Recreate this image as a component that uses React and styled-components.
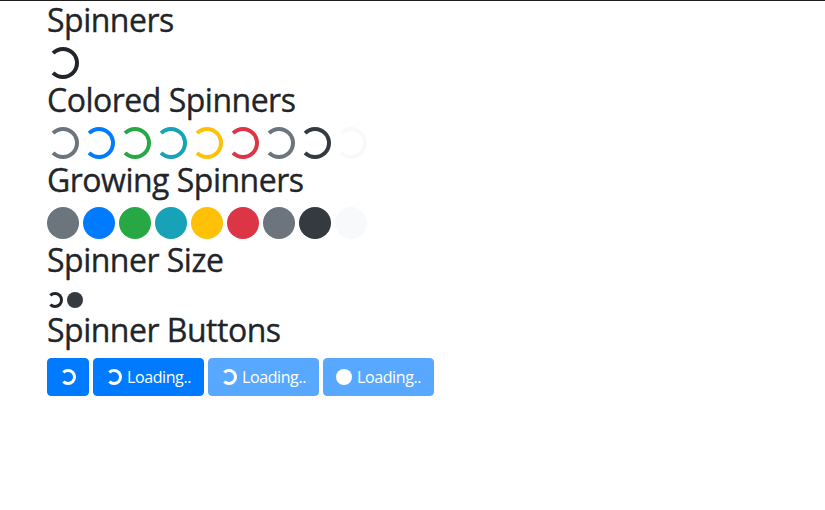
import React from "react";
import styled, { createGlobalStyle } from "styled-components";

const GlobalStyle = createGlobalStyle`
  html, body { margin: 0; padding: 0; background: #fff; }
  body {
    font-family: "Open Sans", "Noto Sans", sans-serif;
    font-size: 16px;
    line-height: 1.5;
    color: #212529;
  }
`;

const Page = styled.div`
  border-top: 1px solid #1f1f1f;
  padding-left: 47px;
  min-height: 509px;
`;

const Heading = styled.h2`
  margin: 0 0 8px;
  font-size: 32px;
  font-weight: 400;
  line-height: 38.4px;
  letter-spacing: -0.5px;
  color: #212529;
  -webkit-text-stroke: 0.35px #212529;
`;

const SpinnerRow = styled.div`
  display: flex;
  align-items: flex-start;
  gap: 4px;
  height: ${(p) => (p.small ? "24px" : "33.6px")};
  padding-top: ${(p) => (p.small ? "4.6px" : "0")};
  box-sizing: border-box;
`;

const BorderSpinner = styled.span`
  display: inline-block;
  flex: none;
  box-sizing: border-box;
  width: ${(p) => (p.small ? "16px" : "32px")};
  height: ${(p) => (p.small ? "16px" : "32px")};
  border: ${(p) => (p.small ? "3.2px" : "4px")} solid ${(p) => p.color || "#212529"};
  border-left-color: transparent;
  border-radius: 50%;
`;

const GrowSpinner = styled.span`
  display: inline-block;
  flex: none;
  width: ${(p) => (p.small ? "16px" : "32px")};
  height: ${(p) => (p.small ? "16px" : "32px")};
  border-radius: 50%;
  background: ${(p) => p.color || "#343a40"};
`;

const ButtonRow = styled.div`
  display: flex;
  gap: 4px;
`;

const Button = styled.button`
  display: inline-flex;
  align-items: center;
  gap: 5px;
  box-sizing: border-box;
  height: 38px;
  padding: 6px 12px;
  border: 1px solid #007bff;
  border-radius: 4px;
  background: #007bff;
  color: #fff;
  font-family: "Open Sans", "Noto Sans", sans-serif;
  font-size: 16px;
  line-height: 24px;
  letter-spacing: -0.4px;
  opacity: ${(p) => (p.disabled ? 0.65 : 1)};
  cursor: ${(p) => (p.disabled ? "default" : "pointer")};
`;

const colors = [
  "#6c757d",
  "#007bff",
  "#28a745",
  "#17a2b8",
  "#ffc107",
  "#dc3545",
  "#6c757d",
  "#343a40",
  "#f8f9fa",
];

export default function App() {
  return (
    <Page>
      <GlobalStyle />
      <Heading>Spinners</Heading>
      <SpinnerRow>
        <BorderSpinner color="#212529" />
      </SpinnerRow>

      <Heading>Colored Spinners</Heading>
      <SpinnerRow>
        {colors.map((c, i) => (
          <BorderSpinner key={i} color={c} />
        ))}
      </SpinnerRow>

      <Heading>Growing Spinners</Heading>
      <SpinnerRow>
        {colors.map((c, i) => (
          <GrowSpinner key={i} color={c} />
        ))}
      </SpinnerRow>

      <Heading>Spinner Size</Heading>
      <SpinnerRow small>
        <BorderSpinner small color="#212529" />
        <GrowSpinner small color="#343a40" />
      </SpinnerRow>

      <Heading>Spinner Buttons</Heading>
      <ButtonRow>
        <Button>
          <BorderSpinner small color="#fff" />
        </Button>
        <Button>
          <BorderSpinner small color="#fff" />
          Loading..
        </Button>
        <Button disabled>
          <BorderSpinner small color="#fff" />
          Loading..
        </Button>
        <Button disabled>
          <GrowSpinner small color="#fff" />
          Loading..
        </Button>
      </ButtonRow>
    </Page>
  );
}
